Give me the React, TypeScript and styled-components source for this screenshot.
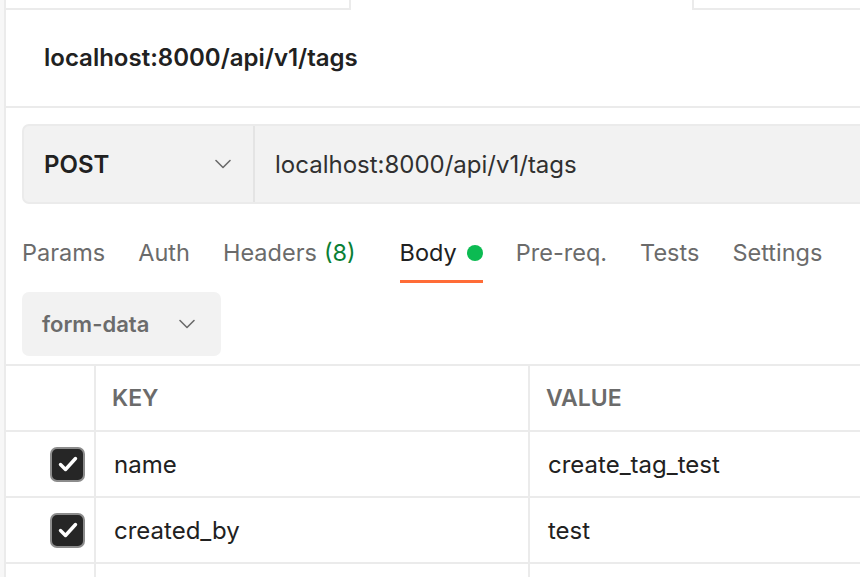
import React from "react";
import styled, { createGlobalStyle } from "styled-components";

const Global = createGlobalStyle`
  html, body { margin: 0; padding: 0; background: #ffffff; }
  body { font-family: Inter, "Noto Sans", sans-serif; color: #212121; overflow: hidden; }
  * { box-sizing: border-box; }
`;

const LINE = "#ebebeb";

const Shell = styled.div`
  display: flex;
  width: 860px;
  height: 577px;
  overflow: hidden;
`;

const SideStrip = styled.div`
  flex: 0 0 6px;
  background: #f7f7f7;
  border-right: 2px solid ${LINE};
`;

const Main = styled.div`
  flex: 1;
  display: flex;
  flex-direction: column;
  min-width: 0;
  overflow: hidden;
  & > * { flex-shrink: 0; }
`;

const TabStrip = styled.div`
  display: flex;
  height: 10px;
`;

const TabGap = styled.div<{ $w?: number }>`
  flex: ${(p) => (p.$w ? `0 0 ${p.$w}px` : "1")};
  border-bottom: 2px solid ${LINE};
`;

const OpenTab = styled.div`
  flex: 0 0 345px;
  border-left: 2px solid ${LINE};
  border-right: 2px solid ${LINE};
  background: #fff;
`;

const TitleBar = styled.div`
  height: 98px;
  display: flex;
  align-items: center;
  padding-left: 38px;
  padding-bottom: 2px;
  border-bottom: 2px solid ${LINE};
  font-size: 24px;
  font-weight: 600;
  color: #212121;
`;

const Content = styled.div`
  padding: 16px 0 0 16px;
  display: flex;
  flex-direction: column;
  & > * { flex-shrink: 0; }
`;

const UrlBar = styled.div`
  display: flex;
  height: 80px;
  margin-right: -20px;
  background: #f2f2f2;
  border: 2px solid ${LINE};
  border-radius: 7px;
`;

const MethodSelect = styled.div`
  flex: 0 0 231px;
  display: flex;
  align-items: center;
  justify-content: space-between;
  padding: 0 22px 0 20px;
  border-right: 2px solid #e4e4e4;
  font-size: 24px;
  font-weight: 600;
  color: #212121;
`;

const UrlText = styled.div`
  display: flex;
  align-items: center;
  padding-left: 20px;
  font-size: 24px;
  font-weight: 400;
  color: #303030;
`;

const TabsRow = styled.div`
  display: flex;
  gap: 33px;
  margin-top: 20px;
  height: 59px;
`;

const Tab = styled.div<{ $active?: boolean; $extra?: number }>`
  display: flex;
  align-items: center;
  gap: 10px;
  padding-top: 1px;
  margin-right: ${(p) => p.$extra ?? 0}px;
  font-size: 23.5px;
  font-weight: 400;
  color: ${(p) => (p.$active ? "#212121" : "#6b6b6b")};
  border-bottom: 3px solid ${(p) => (p.$active ? "#ff6c37" : "transparent")};
`;

const Count = styled.span`
  color: #0a7f35;
  margin-left: 7px;
`;

const Dot = styled.span`
  width: 16px;
  height: 16px;
  border-radius: 50%;
  background: #0cbb52;
`;

const BodyType = styled.div`
  margin-top: 9px;
  width: 199px;
  height: 64px;
  display: flex;
  align-items: center;
  justify-content: space-between;
  padding: 0 26px 0 20px;
  background: #f2f2f2;
  border-radius: 7px;
  font-size: 22px;
  font-weight: 600;
  color: #6b6b6b;
`;

const Table = styled.div`
  margin-top: 8px;
  border-top: 2px solid ${LINE};
  display: flex;
  flex-direction: column;
  & > * { flex-shrink: 0; }
`;

const Row = styled.div`
  display: grid;
  grid-template-columns: 90px 434px 1fr;
  height: 66px;
  border-bottom: 2px solid ${LINE};
`;

const CheckCell = styled.div`
  display: flex;
  align-items: center;
  justify-content: flex-end;
  padding-right: 9px;
  border-right: 2px solid ${LINE};
`;

const Cell = styled.div<{ $head?: boolean; $last?: boolean }>`
  display: flex;
  align-items: center;
  padding-left: ${(p) => (p.$head ? 16 : 18)}px;
  font-size: ${(p) => (p.$head ? 23 : 24)}px;
  font-weight: ${(p) => (p.$head ? 600 : 400)};
  color: ${(p) => (p.$head ? "#6b6b6b" : "#212121")};
  border-right: ${(p) => (p.$last ? "none" : `2px solid ${LINE}`)};
`;

const Box = styled.div`
  width: 35px;
  height: 35px;
  border-radius: 7px;
  background: #262626;
  border: 2px solid #8c8c8c;
  display: flex;
  align-items: center;
  justify-content: center;
`;

const Chevron = ({ w = 16 }: { w?: number }) => (
  <svg width={w} height={w / 2 + 2} viewBox="0 0 16 9" fill="none">
    <polyline points="1,1 8,8 15,1" stroke="#6b6b6b" strokeWidth="1.6" strokeLinecap="round" strokeLinejoin="round" />
  </svg>
);

const Check = () => (
  <Box>
    <svg width="24" height="24" viewBox="0 0 24 24" fill="none">
      <path d="M4.5 12.5 L9.5 17.5 L19.5 6.5" stroke="#fff" strokeWidth="3.4" strokeLinecap="round" strokeLinejoin="round" />
    </svg>
  </Box>
);

const rows = [
  { key: "name", value: "create_tag_test" },
  { key: "created_by", value: "test" },
];

export default function App() {
  return (
    <>
      <Global />
      <Shell>
        <SideStrip />
        <Main>
          <TabStrip>
            <TabGap $w={343} />
            <OpenTab />
            <TabGap />
          </TabStrip>
          <TitleBar>localhost:8000/api/v1/tags</TitleBar>
          <Content>
            <UrlBar>
              <MethodSelect>
                POST
                <Chevron />
              </MethodSelect>
              <UrlText>localhost:8000/api/v1/tags</UrlText>
            </UrlBar>
            <TabsRow>
              <Tab>Params</Tab>
              <Tab>Auth</Tab>
              <Tab $extra={11}>
                <span>
                  Headers<Count>(8)</Count>
                </span>
              </Tab>
              <Tab $active>
                Body
                <Dot />
              </Tab>
              <Tab>Pre-req.</Tab>
              <Tab>Tests</Tab>
              <Tab>Settings</Tab>
            </TabsRow>
            <BodyType>
              form-data
              <Chevron />
            </BodyType>
          </Content>
          <Table>
            <Row>
              <CheckCell />
              <Cell $head>KEY</Cell>
              <Cell $head $last>VALUE</Cell>
            </Row>
            {rows.map((r) => (
              <Row key={r.key}>
                <CheckCell>
                  <Check />
                </CheckCell>
                <Cell>{r.key}</Cell>
                <Cell $last>{r.value}</Cell>
              </Row>
            ))}
            <Row>
              <CheckCell />
              <Cell />
              <Cell $last />
            </Row>
          </Table>
        </Main>
      </Shell>
    </>
  );
}
